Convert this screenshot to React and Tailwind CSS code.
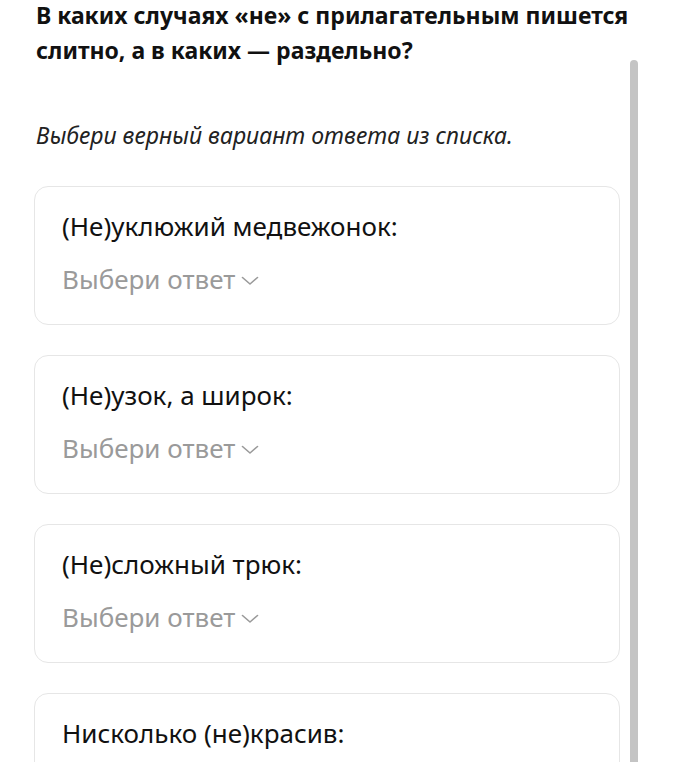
const items = [
  "(Не)уклюжий медвежонок:",
  "(Не)узок, а широк:",
  "(Не)сложный трюк:",
  "Нисколько (не)красив:",
];

function Chevron() {
  return (
    <svg viewBox="0 0 18 10" className="ml-[6px] mt-[4px] h-[10px] w-[18px]" fill="none">
      <polyline points="1.5,1.5 9,8 16.5,1.5" stroke="#9a9a9a" strokeWidth="1.6" strokeLinecap="round" strokeLinejoin="round" />
    </svg>
  );
}

export default function App() {
  return (
    <div className="relative h-[762px] overflow-hidden bg-white font-['Noto_Sans',sans-serif] text-[#111]">
      <div className="pl-[36px] pr-[40px] -mt-[2px]">
        <h1 className="text-[23px] font-bold leading-[35px]">
          В каких случаях «не» с прилагательным пишется слитно, а в каких — раздельно?
        </h1>
        <p className="mt-[52px] text-[23px] italic leading-[30px] text-[#222]">
          Выбери верный вариант ответа из списка.
        </p>
      </div>
      <div className="ml-[34px] mr-[59px] mt-[36px] flex flex-col gap-[30px]">
        {items.map((text, i) => (
          <div
            key={i}
            className="rounded-[14px] border border-[#e6e6e6] px-[27px] pt-[22px] pb-[28px]"
          >
            <div className="text-[26px] leading-[34px] text-[#111]">{text}</div>
            <div className="mt-[19px] flex items-center text-[26px] leading-[34px] text-[#9a9a9a]">
              Выбери ответ
              <Chevron />
            </div>
          </div>
        ))}
      </div>
      <div className="absolute left-[630px] top-[60px] bottom-0 w-[8px] rounded-t-full bg-[#c4c4c4]" />
    </div>
  );
}
